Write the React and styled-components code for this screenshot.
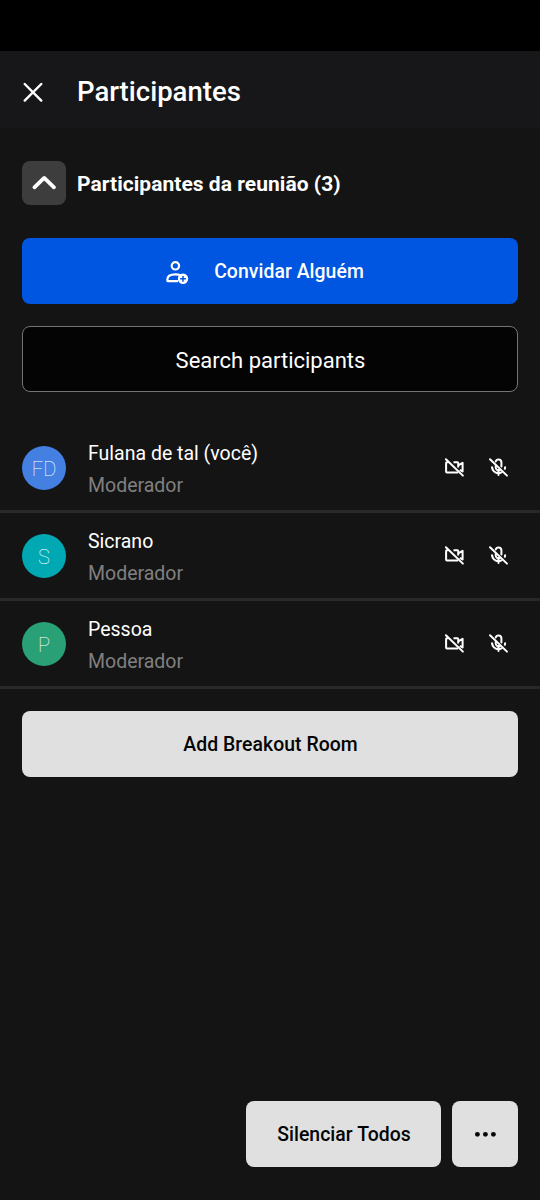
import React from "react";
import styled, { createGlobalStyle } from "styled-components";

const GlobalStyle = createGlobalStyle`
  * { box-sizing: border-box; }
  body { margin: 0; background: #141414; }
  button, input { font: inherit; margin: 0; padding: 0; border: 0; }
  svg { display: block; flex: none; }
`;

const Screen = styled.div`
  width: 540px;
  height: 1200px;
  display: flex;
  flex-direction: column;
  background: #141414;
  color: #fff;
  font-family: Roboto, sans-serif;
  overflow: hidden;
`;

const StatusBar = styled.div`
  height: 51px;
  flex: none;
  background: #000;
`;

const Header = styled.header`
  height: 77px;
  flex: none;
  display: flex;
  align-items: center;
  padding: 5px 22px 0;
  gap: 33px;
  background: #171719;
`;

const Title = styled.h1`
  margin: 0;
  font-size: 27.5px;
  line-height: 32px;
  font-weight: 500;
  padding-bottom: 1px;
`;

const IconButton = styled.button`
  display: flex;
  background: transparent;
  color: #fff;
`;

const Section = styled.section`
  display: flex;
  flex-direction: column;
  gap: 22px;
  padding: 33px 22px;
`;

const SectionHead = styled.div`
  display: flex;
  align-items: center;
  gap: 11px;
  margin-bottom: 11px;
`;

const Collapse = styled.button`
  width: 44px;
  height: 44px;
  display: flex;
  align-items: center;
  justify-content: center;
  border-radius: 8px;
  background: #3d3d3d;
  color: #fff;
`;

const SectionTitle = styled.h2`
  margin: 0;
  font-size: 21px;
  line-height: 28px;
  font-weight: 700;
  letter-spacing: 0.04px;
  padding-top: 2px;
`;

const Button = styled.button`
  height: 66px;
  width: ${(p) => p.$width || "100%"};
  flex: none;
  display: flex;
  align-items: center;
  justify-content: center;
  gap: ${(p) => (p.$primary ? "25px" : "0")};
  padding: ${(p) => (p.$primary ? "1px 11px 0 0" : "1px 0 0 1px")};
  border-radius: 8px;
  font-size: 19.4px;
  font-weight: 500;
  letter-spacing: 0.05px;
  background: ${(p) => (p.$primary ? "#0056e0" : "#e0e0e0")};
  color: ${(p) => (p.$primary ? "#fff" : "#040404")};
`;

const SearchField = styled.div`
  height: 66px;
  display: flex;
  align-items: center;
  justify-content: center;
  padding: 2px 0 0 1px;
  border: 1px solid #757575;
  border-radius: 8px;
  background: #040404;
  font-size: 22px;
`;

const List = styled.ul`
  list-style: none;
  margin: 0;
  padding: 0;
`;

const Row = styled.li`
  height: 88px;
  display: flex;
  align-items: center;
  padding: 0 31px 0 22px;
  border-bottom: 3px solid #292929;
`;

const Avatar = styled.div`
  width: 44px;
  height: 44px;
  display: flex;
  align-items: center;
  justify-content: center;
  border-radius: 50%;
  background: ${(p) => p.$color};
  color: #fff;
  font-size: 20px;
  font-weight: 100;
  padding-top: 2px;
`;

const Info = styled.div`
  flex: 1;
  margin-left: 22px;
  padding-top: 4px;
`;

const Name = styled.div`
  font-size: 19.5px;
  line-height: 32px;
`;

const Role = styled(Name)`
  color: #808080;
`;

const MediaState = styled.div`
  display: flex;
  gap: 22px;
`;

const BreakoutArea = styled.div`
  padding: 22px;
`;

const Footer = styled.footer`
  display: flex;
  justify-content: flex-end;
  gap: 11px;
  margin-top: auto;
  padding: 0 22px 33px;
`;

const CloseIcon = () => (
  <svg width="22" height="22" viewBox="0 0 22 22" fill="none" stroke="currentColor" strokeWidth="2.4" strokeLinecap="round">
    <path d="M2.7 3 19.3 19.6M19.3 3 2.7 19.6" />
  </svg>
);

const ChevronUp = () => (
  <svg width="28" height="28" viewBox="0 0 28 28" fill="none" stroke="currentColor" strokeWidth="3.8" strokeLinecap="round" strokeLinejoin="round">
    <path d="M4.4 18.3 14.2 8.9l9.8 9.4" />
  </svg>
);

const InviteIcon = () => (
  <svg width="24" height="24" viewBox="0 0 24 24" fill="none" stroke="currentColor" strokeWidth="2.2">
    <circle cx="10.4" cy="5.8" r="3.7" />
    <path d="M13 21.2H3.2c-.5 0-.8-.3-.8-.8v-1.2c0-3.3 3.3-4.9 8-4.9 2.2 0 4.1.4 5.5 1.1" />
    <circle cx="18" cy="18.8" r="5.2" fill="currentColor" stroke="none" />
    <path d="M18 15.9v5.8M15.1 18.8h5.8" stroke="#0056e0" strokeWidth="1.5" />
  </svg>
);

const CameraOff = () => (
  <svg width="22" height="22" viewBox="0 0 22 22" fill="none" stroke="currentColor" strokeWidth="2" strokeLinejoin="round">
    <path d="M5.4 5.2H3.9a.8.8 0 0 0-.8.8v8.7c0 .5.3.8.8.8h11.3" />
    <path d="M10.5 5.2h3.9c.5 0 .8.3.8.8v2.4l4.4-2.6v8.7l-2.8-1.7M15.2 8.4v2.2" />
    <path d="m2.9 2.2 17 16.4" strokeLinecap="round" />
  </svg>
);

const MicOff = () => (
  <svg width="22" height="22" viewBox="0 0 22 22" fill="none" stroke="currentColor" strokeWidth="2" strokeLinecap="round">
    <path d="M8.7 4.6a2.9 2.9 0 0 1 5.7.4v4.4M8.7 8.7v1.8a2.9 2.9 0 0 0 4.2 2.5" />
    <path d="M5 10.2a6.5 6.5 0 0 0 9.5 5.2M18.1 10.2c0 .6-.1 1.1-.3 1.6M11.5 13v5" />
    <path d="m3 2.2 17 16.4" />
  </svg>
);

const MoreIcon = () => (
  <svg width="22" height="22" viewBox="0 0 22 22" fill="currentColor">
    <circle cx="2.4" cy="10.3" r="2.4" />
    <circle cx="10.4" cy="10.3" r="2.4" />
    <circle cx="18.4" cy="10.3" r="2.4" />
  </svg>
);

const participants = [
  { name: "Fulana de tal (você)", initials: "FD", color: "#4380e2" },
  { name: "Sicrano", initials: "S", color: "#00a8b3" },
  { name: "Pessoa", initials: "P", color: "#2aa076" },
];

export default function App() {
  return (
    <Screen>
      <GlobalStyle />
      <StatusBar />
      <Header>
        <IconButton aria-label="Fechar"><CloseIcon /></IconButton>
        <Title>Participantes</Title>
      </Header>
      <Section>
        <SectionHead>
          <Collapse aria-label="Recolher"><ChevronUp /></Collapse>
          <SectionTitle>Participantes da reunião (3)</SectionTitle>
        </SectionHead>
        <Button $primary><InviteIcon />Convidar Alguém</Button>
        <SearchField>Search participants</SearchField>
      </Section>
      <List>
        {participants.map((p) => (
          <Row key={p.name}>
            <Avatar $color={p.color}>{p.initials}</Avatar>
            <Info>
              <Name>{p.name}</Name>
              <Role>Moderador</Role>
            </Info>
            <MediaState><CameraOff /><MicOff /></MediaState>
          </Row>
        ))}
      </List>
      <BreakoutArea><Button>Add Breakout Room</Button></BreakoutArea>
      <Footer>
        <Button $width="195px">Silenciar Todos</Button>
        <Button $width="66px" aria-label="Mais"><MoreIcon /></Button>
      </Footer>
    </Screen>
  );
}
